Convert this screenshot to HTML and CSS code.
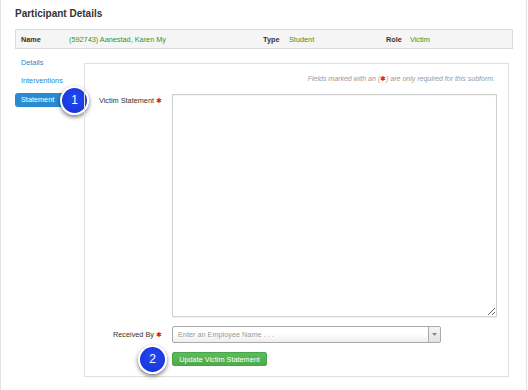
FILE: index.html
```html
<!DOCTYPE html>
<html>
<head>
<meta charset="utf-8">
<link rel="stylesheet" href="styles.css">
</head>
<body>
<div class="page">
  <h1 class="title">Participant Details</h1>
  <div class="infobar">
    <span class="lbl lbl-name">Name</span>
    <span class="val val-name">(592743) Aanestad, Karen My</span>
    <span class="lbl lbl-type">Type</span>
    <span class="val val-type">Student</span>
    <span class="lbl lbl-role">Role</span>
    <span class="val">Victim</span>
  </div>
  <div class="main">
    <nav class="nav">
      <a class="nav-item">Details</a>
      <a class="nav-item">Interventions</a>
      <a class="nav-item active">Statement</a>
      <span class="badge badge-1">1</span>
    </nav>
    <div class="panel">
      <p class="note">Fields marked with an (<span class="star">✱</span>) are only required for this subform.</p>
      <div class="row">
        <label class="flabel">Victim Statement <span class="star">✱</span></label>
        <textarea class="ta"></textarea>
      </div>
      <div class="row row-mid">
        <label class="flabel">Received By <span class="star">✱</span></label>
        <div class="select">
          <span class="ph">Enter an Employee Name . . .</span>
          <span class="arrow"><svg width="5" height="3" viewBox="0 0 5 3"><path d="M0 0H5L2.5 3Z" fill="#888"/></svg></span>
        </div>
      </div>
      <div class="row row-mid btn-row">
        <span class="flabel"></span>
        <button class="btn">Update Victim Statement</button>
        <span class="badge badge-2">2</span>
      </div>
    </div>
  </div>
</div>
</body>
</html>
```
FILE: styles.css
```css
* { box-sizing: border-box; }
html, body { margin: 0; padding: 0; background: #fff; }
body { font-family: "Liberation Sans", Arial, sans-serif; font-size: 7.3px; color: #333; }
.page {
  width: 527px;
  height: 390px;
  border-left: 1px solid #e4e4e4;
  border-right: 1px solid #e4e4e4;
  padding: 8px 13px 0 14px;
}
.title {
  margin: 0 0 9px 0;
  font-size: 10px;
  line-height: 12px;
  font-weight: bold;
  color: #333;
}
.infobar {
  height: 20px;
  background: #f5f5f5;
  border: 1px solid #dcdcdc;
  display: flex;
  align-items: center;
  padding-left: 5px;
  white-space: nowrap;
}
.lbl { font-weight: bold; color: #333; }
.val { color: #2e962e; }
.lbl-name { width: 48px; }
.val-name { width: 194px; }
.lbl-type { width: 26px; }
.val-type { width: 97px; }
.lbl-role { width: 24px; }
.main {
  display: flex;
  margin-top: 8px;
  gap: 9px;
}
.nav {
  position: relative;
  width: 60px;
  display: flex;
  flex-direction: column;
  gap: 6px;
}
.nav-item {
  display: block;
  line-height: 12px;
  padding: 0 6px;
  color: #1f86cf;
  white-space: nowrap;
}
.nav-item.active {
  background: #2a8bd2;
  color: #fff;
  border-radius: 3px;
  padding: 1px 6px;
}
.panel {
  position: relative;
  width: 425px;
  height: 314px;
  margin-top: 6px;
  border: 1px solid #e0e0e0;
  padding: 9px 10px 0 11px;
}
.note {
  margin: 0 3px 9px 0;
  text-align: right;
  font-style: italic;
  font-size: 7px;
  line-height: 12px;
  color: #999;
}
.star { color: #e21b1b; font-style: normal; font-size: 7px; }
.row {
  display: flex;
  gap: 10px;
}
.row-mid { margin-top: 9px; align-items: center; }
.flabel {
  width: 66px;
  flex: none;
  text-align: right;
  line-height: 12px;
  color: #333;
  white-space: nowrap;
}
.row:first-of-type .flabel { padding-top: 1px; }
.ta {
  display: block;
  width: 325px;
  height: 223px;
  margin: 0;
  border: 1px solid #cfcfcf;
  border-bottom-color: #d8d8d8;
  box-shadow: inset 0 1px 1px rgba(0,0,0,.06), 0 1px 0 #eee;
  border-radius: 1px;
  font: inherit;
}
.select {
  width: 269px;
  height: 17px;
  display: flex;
  align-items: center;
  border: 1px solid #aaa;
  border-radius: 2px;
  background: linear-gradient(#fff 0%, #fff 45%, #eee 100%);
  overflow: hidden;
}
.ph {
  flex: 1;
  padding-left: 5px;
  color: #999;
  white-space: nowrap;
}
.arrow {
  width: 12px;
  height: 100%;
  border-left: 1px solid #aaa;
  background: linear-gradient(#f4f4f4, #e2e2e2);
  display: flex;
  align-items: center;
  justify-content: center;
}
.btn-row { position: relative; }
.btn {
  width: 95px;
  height: 14px;
  margin: 0;
  padding: 0;
  border: 1px solid #47a447;
  border-radius: 2px;
  background: linear-gradient(#5dbb5d, #4cab4c);
  color: #fff;
  font: inherit;
  white-space: nowrap;
}
.badge {
  position: absolute;
  width: 29px;
  height: 29px;
  border-radius: 50%;
  border: 2px solid #fff;
  background: radial-gradient(circle at 50% 40%, #2448f0, #1330d8);
  color: #fff;
  font-family: "Liberation Sans", Arial, sans-serif;
  font-size: 12px;
  line-height: 25px;
  text-align: center;
  box-shadow: 0 2px 4px rgba(0,0,0,.55);
}
.badge-1 { left: 45px; top: 29px; }
.badge-2 { left: 42px; top: -7px; }
```
